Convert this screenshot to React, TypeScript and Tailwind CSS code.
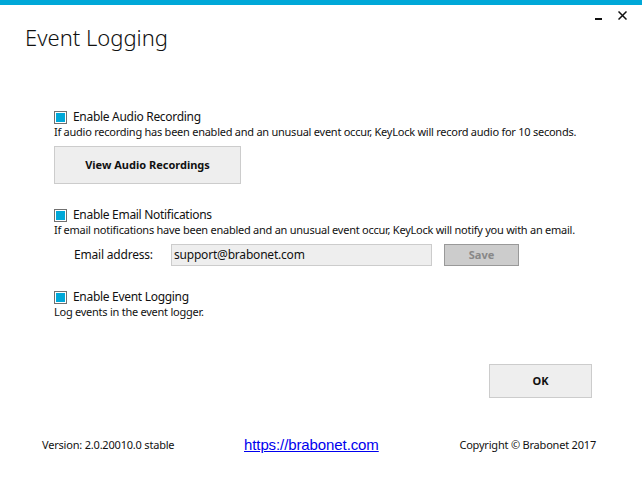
import React from "react";

function Check({ label }: { label: string }) {
  return (
    <div className="flex items-center h-[16px]">
      <div className="w-[13px] h-[13px] border border-[#707070] bg-white p-[1px] box-border">
        <div className="w-full h-full bg-[#00a8d8]" />
      </div>
      <span className="ml-[6px] text-[12px] text-[#111] tracking-[-0.3px]">{label}</span>
    </div>
  );
}

export default function App() {
  return (
    <div
      className="w-[642px] h-[496px] bg-white flex flex-col overflow-hidden"
      style={{ fontFamily: '"Noto Sans", "Open Sans", sans-serif' }}
    >
      <div className="h-[5px] bg-[#00a8d8] shrink-0" />
      <div className="relative h-[55px] shrink-0">
        <div className="absolute left-[595px] top-[13px] w-[7px] h-[2px] bg-[#111]" />
        <svg className="absolute left-[618px] top-[6px]" width="9" height="9" viewBox="0 0 9 9">
          <path d="M0.5 0.5 L8.5 8.5 M8.5 0.5 L0.5 8.5" stroke="#111" strokeWidth="1.5" />
        </svg>
        <h1 className="pl-[25px] pt-[17px] text-[22px] leading-[30px] font-light text-[#111]">
          Event Logging
        </h1>
      </div>

      <div className="pl-[54px] flex flex-col">
        <div className="mt-[49px]">
          <Check label="Enable Audio Recording" />
        </div>
        <p className="text-[11px] leading-[14px] text-[#111] tracking-[-0.25px]">
          If audio recording has been enabled and an unusual event occur, KeyLock will record audio for 10 seconds.
        </p>
        <button className="mt-[7px] w-[187px] h-[38px] bg-[#eeeeee] border border-[#cccccc] text-[11px] font-bold text-[#111]">
          View Audio Recordings
        </button>

        <div className="mt-[23px]">
          <Check label="Enable Email Notifications" />
        </div>
        <p className="text-[11px] leading-[14px] text-[#111] tracking-[-0.25px]">
          If email notifications have been enabled and an unusual event occur, KeyLock will notify you with an email.
        </p>
        <div className="mt-[7px] flex items-center h-[22px]">
          <span className="ml-[20px] w-[97px] text-[12px] text-[#111] tracking-[-0.2px]">Email address:</span>
          <div className="w-[261px] h-[22px] bg-[#eeeeee] border border-[#cccccc] flex items-center pl-[2px] text-[12px] text-[#111] tracking-[-0.2px]">
            support@brabonet.com
          </div>
          <button className="ml-[12px] w-[75px] h-[22px] bg-[#cccccc] border border-[#999999] text-[11px] font-bold text-[#888888]">
            Save
          </button>
        </div>

        <div className="mt-[23px]">
          <Check label="Enable Event Logging" />
        </div>
        <p className="text-[11px] leading-[14px] text-[#111] tracking-[-0.25px]">
          Log events in the event logger.
        </p>
      </div>

      <div className="flex justify-end pr-[50px] mt-[45px]">
        <button className="w-[103px] h-[34px] bg-[#eeeeee] border border-[#cccccc] text-[11px] font-bold text-[#111]">
          OK
        </button>
      </div>

      <div className="mt-[37px] flex items-center pl-[42px] pr-[46px] h-[20px]">
        <span className="w-[202px] text-[11px] text-[#111] tracking-[-0.2px]">Version: 2.0.20010.0 stable</span>
        <a
          href="#"
          className="text-[15px] text-[#0000ee] underline tracking-[-0.1px]"
          style={{ fontFamily: '"Liberation Sans", Arial, sans-serif' }}
        >
          https://brabonet.com
        </a>
        <span className="ml-auto text-[11px] text-[#111] tracking-[-0.2px]">Copyright © Brabonet 2017</span>
      </div>
    </div>
  );
}
